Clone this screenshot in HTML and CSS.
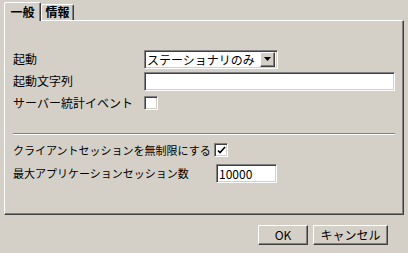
FILE: index.html
```html
<!DOCTYPE html>
<html lang="ja">
<head>
    <meta charset="UTF-8">
    <title>設定</title>
    <link rel="stylesheet" href="styles.css">
</head>
<body>
    <div class="dialog">
        <div class="tabs">
            <div class="tab active">一般</div>
            <div class="tab">情報</div>
        </div>
        <div class="panel">
            <div class="row r1">
                <span class="label">起動</span>
                <div class="combo">
                    <span class="combo-text">ステーショナリのみ</span>
                    <span class="combo-btn">
                        <svg width="7" height="4" viewBox="0 0 7 4"><path d="M0 0h7L3.5 4z" fill="#000"/></svg>
                    </span>
                </div>
            </div>
            <div class="row r2">
                <span class="label">起動文字列</span>
                <div class="field wide"></div>
            </div>
            <div class="row r3">
                <span class="label">サーバー統計イベント</span>
                <div class="check"></div>
            </div>
            <div class="sep"></div>
            <div class="row r4">
                <span class="label">クライアントセッションを無制限にする</span>
                <div class="check">
                    <svg width="9" height="8" viewBox="0 0 9 8"><path d="M1 4.5l2 2L8 1" fill="none" stroke="#000" stroke-width="1.6"/></svg>
                </div>
            </div>
            <div class="row r5">
                <span class="label">最大アプリケーションセッション数</span>
                <div class="field short">10000</div>
            </div>
        </div>
        <div class="buttons">
            <button class="btn ok">OK</button>
            <button class="btn cancel">キャンセル</button>
        </div>
    </div>
</body>
</html>
```

FILE: styles.css
```css
body {
    margin: 0;
    background-color: #d4d0c8;
    font-family: "Noto Sans CJK JP", "DejaVu Sans", sans-serif;
    font-size: 12px;
    color: #000;
}
.dialog {
    width: 408px;
    height: 253px;
    padding: 2px 4px 0 4px;
    box-sizing: border-box;
}
.tabs {
    display: flex;
    align-items: flex-end;
    height: 18px;
}
.tab {
    box-sizing: border-box;
    height: 16px;
    width: 33px;
    line-height: 14px;
    text-align: center;
    border-top: 1px solid #fff;
    border-left: 1px solid #fff;
    border-right: 1px solid #404040;
    border-radius: 2px 2px 0 0;
    box-shadow: inset -1px 0 #808080;
    font-weight: bold;
}
.tab.active {
    width: 37px;
    height: 19px;
    line-height: 17px;
    margin-bottom: -1px;
    position: relative;
    z-index: 1;
    background-color: #d4d0c8;
}
.panel {
    box-sizing: border-box;
    width: 400px;
    height: 195px;
    border: 1px solid;
    border-color: #fff #404040 #404040 #fff;
    box-shadow: inset -1px -1px #808080;
    padding: 27px 8px 0 8px;
}
.row {
    display: flex;
    align-items: center;
    height: 22px;
}
.label {
    width: 131px;
    flex: none;
    line-height: 14px;
    white-space: nowrap;
}
.r4 .label {
    width: 201px;
    font-size: 11px;
}
.r5 .label {
    width: 203px;
    font-size: 11px;
}
.r5 {
    margin-top: 1px;
}
.field, .combo, .check {
    box-sizing: border-box;
    background-color: #fff;
    border: 1px solid;
    border-color: #808080 #fff #fff #808080;
    box-shadow: inset 1px 1px #404040, inset -1px -1px #d4d0c8;
}
.field {
    height: 19px;
    line-height: 15px;
    padding: 1px 2px;
}
.field.wide {
    width: 252px;
}
.field.short {
    width: 61px;
}
.combo {
    width: 134px;
    height: 19px;
    display: flex;
    align-items: center;
    padding: 2px;
}
.combo-text {
    flex: 1;
    line-height: 15px;
    white-space: nowrap;
}
.combo-btn {
    box-sizing: border-box;
    width: 15px;
    height: 15px;
    background-color: #d4d0c8;
    border: 1px solid;
    border-color: #fff #404040 #404040 #fff;
    box-shadow: inset -1px -1px #808080;
    display: flex;
    align-items: center;
    justify-content: center;
}
.check {
    width: 14px;
    height: 14px;
    display: flex;
    align-items: center;
    justify-content: center;
}
.sep {
    margin: 19px 0 4px;
    border-top: 1px solid #808080;
    border-bottom: 1px solid #fff;
    height: 0;
}
.buttons {
    display: flex;
    justify-content: flex-end;
    gap: 5px;
    padding-right: 16px;
    margin-top: 10px;
}
.btn {
    box-sizing: border-box;
    height: 20px;
    font-family: inherit;
    font-size: 12px;
    color: #000;
    background-color: #d4d0c8;
    border: 1px solid;
    border-color: #fff #404040 #404040 #fff;
    box-shadow: inset -1px -1px #808080;
    padding: 0;
    line-height: 16px;
}
.btn.ok {
    width: 50px;
}
.btn.cancel {
    width: 75px;
}
```
